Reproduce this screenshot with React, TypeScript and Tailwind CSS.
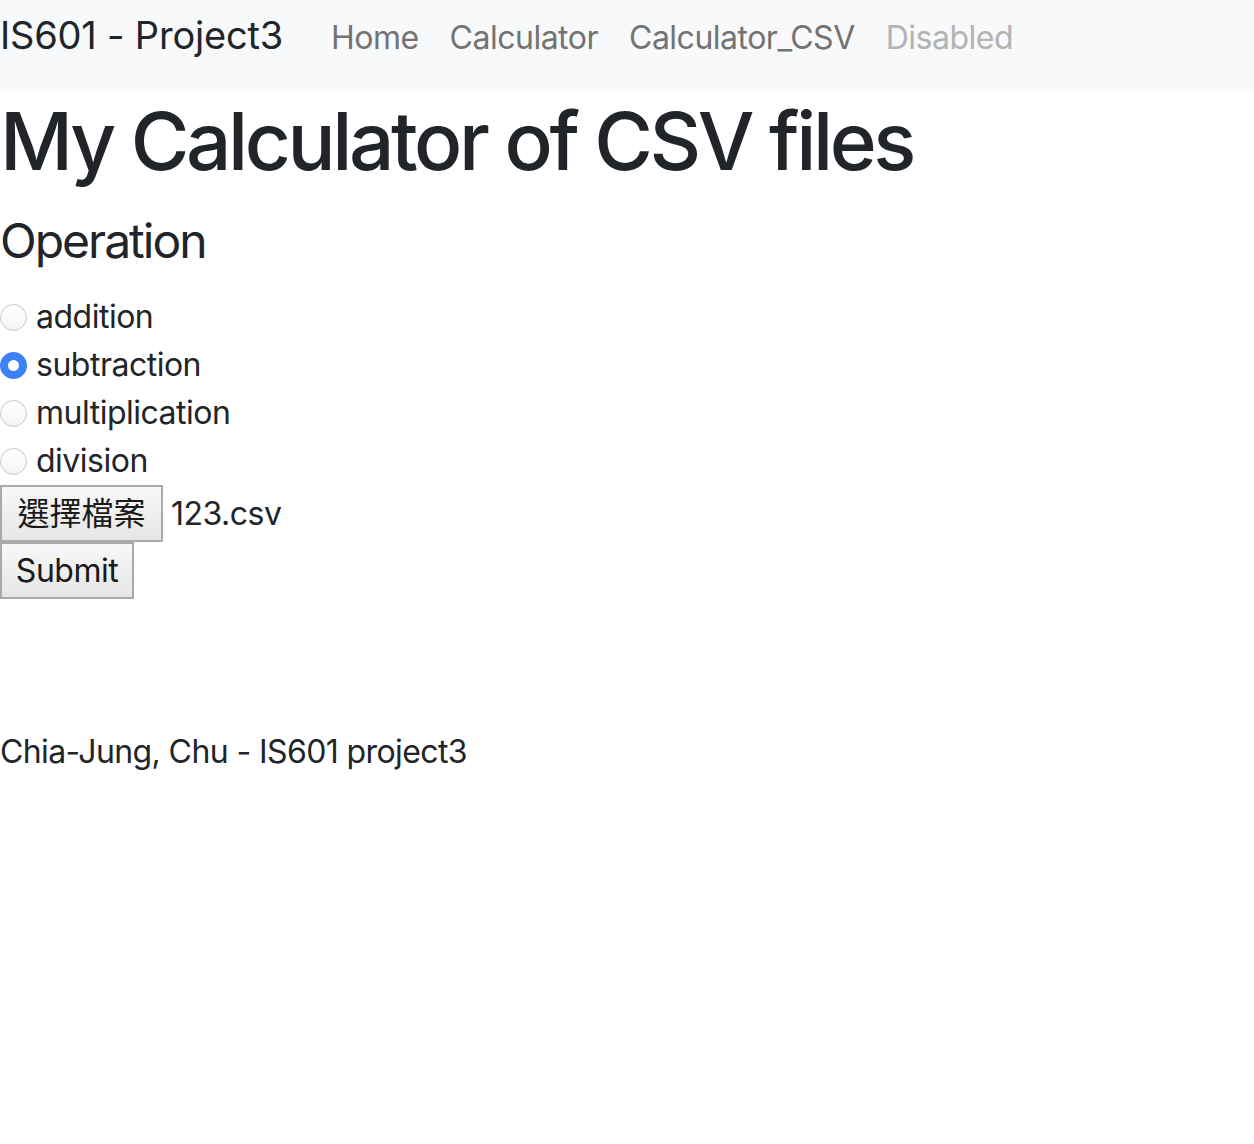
const FONT = "font-['Inter','Noto_Sans_CJK_TC',sans-serif]"

const OPS = ['addition', 'subtraction', 'multiplication', 'division']

function Radio({ checked }: { checked: boolean }) {
  if (checked) {
    return (
      <span className="w-[27px] h-[27px] rounded-full bg-[#3c82f6] flex items-center justify-center shrink-0">
        <span className="w-[11px] h-[11px] rounded-full bg-white" />
      </span>
    )
  }
  return <span className="w-[27px] h-[27px] rounded-full border border-[#c6c6c6] bg-gradient-to-b from-white to-[#f4f4f4] shrink-0" />
}

export default function App() {
  return (
    <div className={`${FONT} text-[#212529] min-h-[1144px] bg-white`}>
      <nav className="h-[91px] bg-[#f8f9fa] flex items-baseline pt-[12px]">
        <span className="text-[38px] leading-[46px] tracking-[-0.2px] mr-[48px]">IS601 - Project3</span>
        <div className="flex items-baseline gap-[31px] text-[32px] leading-[46px] tracking-[-0.5px] text-[#737373]">
          <span>Home</span>
          <span>Calculator</span>
          <span>Calculator_CSV</span>
          <span className="text-[#b3b3b3]">Disabled</span>
        </div>
      </nav>

      <h1 className="text-[80px] font-medium leading-[96px] tracking-[-3.4px] mt-[2px]">My Calculator of CSV files</h1>
      <h3 className="text-[48px] leading-[58px] tracking-[-2px] mt-[23px] mb-[23px]">Operation</h3>

      <div className="text-[32px] leading-[48px] tracking-[-0.5px]">
        {OPS.map((op) => (
          <div key={op} className="flex items-center gap-[9px]">
            <Radio checked={op === 'subtraction'} />
            <span>{op}</span>
          </div>
        ))}
      </div>

      <div className="flex items-center text-[32px] tracking-[-0.5px]">
        <span className="h-[57px] w-[163px] border-2 border-[#a9a9a9] bg-gradient-to-b from-[#f8f8f8] to-[#e6e6e6] flex items-center justify-center text-[#1a1a1a] tracking-normal">
          選擇檔案
        </span>
        <span className="ml-[8px]">123.csv</span>
      </div>
      <div className="h-[57px] w-[134px] border-2 border-[#a9a9a9] bg-gradient-to-b from-[#f8f8f8] to-[#e6e6e6] flex items-center justify-center text-[32px] tracking-[-0.5px] text-[#1a1a1a]">
        Submit
      </div>

      <p className="text-[32px] leading-[48px] tracking-[-0.6px] mt-[129px]">Chia-Jung, Chu - IS601 project3</p>
    </div>
  )
}
